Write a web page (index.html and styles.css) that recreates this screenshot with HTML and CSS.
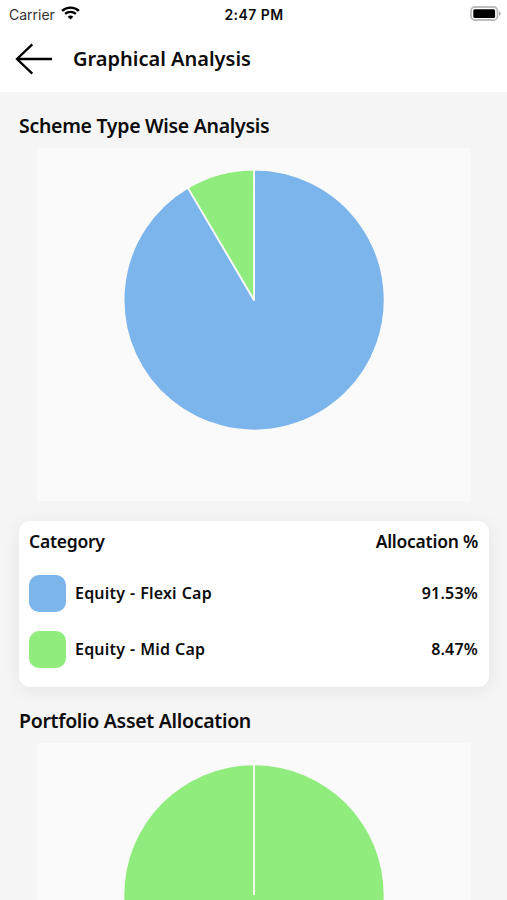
FILE: index.html
```
<!DOCTYPE html>
<html lang="en">
<head>
    <meta charset="UTF-8">
    <meta name="viewport" content="width=device-width, initial-scale=1.0">
    <title>Graphical Analysis</title>
    <link rel="stylesheet" href="styles.css">
</head>
<body>
    <div class="status-bar">
        <div class="carrier">
            <span>Carrier</span>
            <svg class="wifi" width="19" height="14" viewBox="0 0 18 14" preserveAspectRatio="none" fill="none" stroke="#000">
                <path d="M1 4.9a11.4 11.4 0 0 1 16 0" stroke-width="2.4"/>
                <path d="M3.9 7.9a7.3 7.3 0 0 1 10.2 0" stroke-width="2.2"/>
                <path d="M9 13.6L6.3 10.8a3.9 3.9 0 0 1 5.4 0z" fill="#000" stroke="none"/>
            </svg>
        </div>
        <div class="time">2:47 PM</div>
        <svg class="battery" width="32" height="16" viewBox="0 0 32 16">
            <rect x="1" y="1" width="26.5" height="13" rx="4" fill="#fff" stroke="#bdbdbd" stroke-width="1.8"/>
            <rect x="3.3" y="3.2" width="21.8" height="8.8" rx="1.5" fill="#000"/>
            <path d="M29 5.2c2.2 1 2.2 3.6 0 4.6z" fill="#aaa"/>
        </svg>
    </div>

    <header class="header">
        <svg class="back" width="38" height="32" viewBox="0 0 38 32" fill="none" stroke="#000" stroke-width="2.3">
            <path d="M37 16H2M17.3 1.3L2 16l15.3 14.7"/>
        </svg>
        <h1>Graphical Analysis</h1>
    </header>

    <main class="content">
        <section>
            <h2>Scheme Type Wise Analysis</h2>
            <div class="chart">
                <svg width="434" height="353" viewBox="0 0 434 353" stroke="#fafafa" stroke-width="1.8" stroke-linejoin="round">
                    <path d="M217 152V21.5A130.5 130.5 0 1 1 150.8 39.6z" fill="#7cb5ec"/>
                    <path d="M217 152L150.8 39.6A130.5 130.5 0 0 1 217 21.5z" fill="#90ed7d"/>
                </svg>
            </div>
            <div class="card">
                <div class="card-head">
                    <span>Category</span>
                    <span>Allocation %</span>
                </div>
                <div class="row">
                    <i class="swatch blue"></i>
                    <span class="name">Equity - Flexi Cap</span>
                    <span class="value">91.53%</span>
                </div>
                <div class="row">
                    <i class="swatch green"></i>
                    <span class="name">Equity - Mid Cap</span>
                    <span class="value">8.47%</span>
                </div>
            </div>
        </section>

        <section>
            <h2>Portfolio Asset Allocation</h2>
            <div class="chart">
                <svg width="434" height="353" viewBox="0 0 434 353">
                    <circle cx="217" cy="152" r="129.7" fill="#90ed7d"/>
                    <path d="M217 152V21" stroke="#fafafa" stroke-width="1.8"/>
                </svg>
            </div>
        </section>
    </main>
</body>
</html>
```

FILE: styles.css
```
* {
    box-sizing: border-box;
}

body {
    margin: 0;
    height: 900px;
    overflow: hidden;
    background: #f5f5f5;
    color: #0c0c0c;
    font-family: "Noto Sans", sans-serif;
    font-weight: 600;
}

.status-bar {
    display: grid;
    grid-template-columns: 1fr auto 1fr;
    align-items: center;
    height: 28px;
    padding: 0 5px 0 9px;
    background: #fff;
    font-family: Inter, sans-serif;
    font-size: 14px;
}

.carrier {
    display: flex;
    align-items: center;
    gap: 6px;
    font-weight: 400;
    color: #333;
}

.wifi {
    margin-top: -2px;
}

.time {
    margin-left: -3px;
    letter-spacing: 0.45px;
}

.battery {
    justify-self: end;
    margin-top: -1px;
}

.header {
    display: flex;
    align-items: center;
    gap: 20px;
    height: 64px;
    padding: 0 15px 2px;
    background: #fff;
}

h1,
h2 {
    margin: 0;
    font-size: 20px;
    font-weight: 600;
    line-height: 28px;
}

.content {
    padding: 0 18px 0 19px;
}

h2 {
    padding: 20px 0 8px;
    font-size: 19.5px;
    letter-spacing: -0.3px;
}

.chart {
    height: 353px;
    margin: 0 18px 20px;
    background: #fafafa;
}

.chart svg {
    display: block;
}

.card {
    height: 166px;
    padding: 0 11px 10px 10px;
    border-radius: 11px;
    background: #fff;
    box-shadow: 0 3px 18px rgba(0, 0, 0, 0.07);
}

.card-head {
    display: flex;
    justify-content: space-between;
    height: 44px;
    font-size: 17.5px;
    line-height: 41px;
    letter-spacing: -0.25px;
}

.row {
    display: flex;
    align-items: center;
    height: 56px;
    padding-top: 1px;
    font-size: 16px;
    line-height: 22px;
    letter-spacing: 0.2px;
    word-spacing: 0.5px;
}

.swatch {
    width: 37px;
    height: 37px;
    margin-right: 9px;
    border-radius: 10px;
}

.name,
.value {
    padding-bottom: 2px;
}

.blue {
    background: #7cb5ec;
}

.green {
    background: #90ed7d;
}

.value {
    margin-left: auto;
}
```
